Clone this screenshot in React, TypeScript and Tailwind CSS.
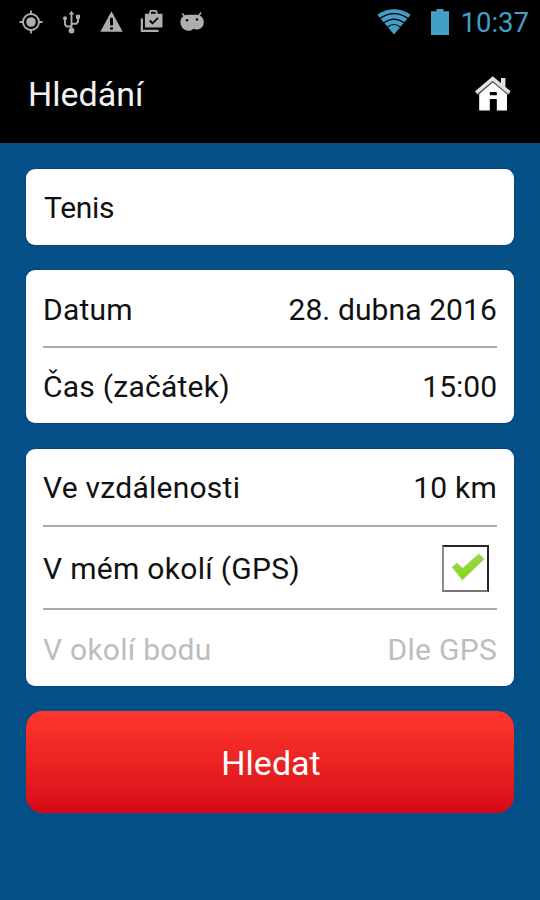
import type { ReactNode } from 'react';

type RowProps = {
  label: string;
  labelClass: string;
  value?: ReactNode;
  className: string;
};

function Row({ label, labelClass, value, className }: RowProps) {
  return (
    <div className={`flex items-center justify-between ${className}`}>
      <span className={labelClass}>{label}</span>
      {value}
    </div>
  );
}

function Divider() {
  return <div className="h-[2px] shrink-0 bg-[#aaaaaa]" />;
}

function Card({ className, children }: { className: string; children: ReactNode }) {
  return (
    <section
      className={`flex flex-col rounded-[9px] bg-white px-[17px] text-[30px] leading-none text-[#111] shadow-[0_0_0_1px_#084384] ${className}`}
    >
      {children}
    </section>
  );
}

function StatusIcons() {
  return (
    <div className="flex items-center gap-4 text-[#aeaeae]">
      <svg width="24" height="24" viewBox="0 0 24 24" fill="none" stroke="currentColor">
        <circle cx="12" cy="12" r="8" strokeWidth="1.9" />
        <circle cx="12" cy="12" r="4.8" fill="currentColor" stroke="none" />
        <path d="M12 .5v4M12 19.5v4M.5 12h4M19.5 12h4" strokeWidth="1.8" />
      </svg>
      <svg width="24" height="24" viewBox="0 0 24 24" fill="none" stroke="currentColor" strokeWidth="1.9">
        <path d="M12.5 3v17M12.5 16.5H7.7L6 14.6V9M12.5 13.7h4.7l1.8-1.8V7" />
        <path d="M9.6 4.6 12.5.8l2.9 3.8z" fill="currentColor" stroke="none" />
        <circle cx="12.5" cy="20.6" r="2.9" fill="currentColor" stroke="none" />
        <circle cx="6" cy="8.3" r="2" fill="currentColor" stroke="none" />
        <path d="M17 4.8h4v4h-4z" fill="currentColor" stroke="none" />
      </svg>
      <svg width="24" height="24" viewBox="0 0 24 24">
        <path d="M12.5 1.2 23.7 21.7H1.3z" fill="currentColor" />
        <rect x="11" y="7.8" width="3" height="7.8" rx="1" fill="black" />
        <rect x="11" y="17.2" width="3" height="2.5" rx="1" fill="black" />
      </svg>
      <svg width="24" height="24" viewBox="0 0 24 24" fill="none">
        <path d="M2.9 8.5v12.4h16.6" stroke="currentColor" strokeWidth="2.2" />
        <path d="M11 4V2.4Q11 .8 12.6.8H16q1.6 0 1.6 1.6V4" stroke="currentColor" strokeWidth="1.8" />
        <path d="M5.9 3.8h17.6v12.5q0 1.2-1.2 1.2H7.1q-1.2 0-1.2-1.2z" fill="currentColor" />
        <path d="m10.7 10.5 2.8 2.8 5.6-5.4" stroke="black" strokeWidth="1.8" />
      </svg>
      <svg width="26" height="24" viewBox="0 0 26 24">
        <path d="m3.3 3.5 3.2 4M22 2.5l-2.7 4" stroke="currentColor" strokeWidth="1.5" />
        <path
          d="M1.4 12.6C1.2 8 4.6 4.8 9 4.8h7.6c4.6 0 8 2.6 8.2 7 .2 4.2-2.6 7.4-6.6 7.6-1.6.1-2.8-.2-3.8-.7-1.2 1.4-3 2.2-5 2.1-4.4-.2-7.8-3.8-8-8.2z"
          fill="currentColor"
        />
        <circle cx="8" cy="10.2" r="1.2" fill="black" />
        <circle cx="18" cy="9.5" r="1.2" fill="black" />
      </svg>
    </div>
  );
}

function WifiIcon() {
  return (
    <svg width="34" height="26" viewBox="0 0 34 26">
      <path d="M.3 5.7Q17-5.2 33.7 5.7L17 25.5z" fill="currentColor" />
      <path
        d="M2.8 9.5Q17-.2 31.2 9.5M6.8 13.8Q17 6.4 27.2 13.8M10.6 18Q17 13 23.4 18"
        fill="none"
        stroke="black"
        strokeWidth="1.2"
      />
    </svg>
  );
}

function HomeIcon() {
  return (
    <svg width="36" height="36" viewBox="0 0 36 36">
      <path d="M26 2h4.4v14H26z" fill="#e4e4e4" />
      <path
        d="M4.2 18 17.8 6 32 18v16.5H21.8V23h-7v11.5H4.2zM14.8 16v3.2h7V16z"
        fill="white"
        fillRule="evenodd"
      />
      <path d="m1.3 17.6 16.5-14 16.6 14" fill="none" stroke="#555" strokeWidth="4.2" />
      <path d="m1.3 16.5 16.5-14 16.6 14" fill="none" stroke="#e2e2e2" strokeWidth="3.6" />
    </svg>
  );
}

function Checkbox() {
  return (
    <div className="mr-2 flex h-[47px] w-[47px] items-center justify-center border-2 border-t-[#262626] border-r-[#262626] border-b-[#777] border-l-[#8a8a8a]">
      <svg width="43" height="43" viewBox="0 0 43 43">
        <defs>
          <linearGradient id="tick" x1="0" y1="0" x2="0" y2="1">
            <stop offset="0" stopColor="#99d94a" />
            <stop offset="1" stopColor="#7fd90c" />
          </linearGradient>
        </defs>
        <path
          d="m8.2 20.2 4.6-4 5.9 5L35 6.9l5.2 5-21.8 21z"
          fill="url(#tick)"
          stroke="#b5cf9d"
          strokeWidth="1"
          strokeLinejoin="round"
        />
      </svg>
    </div>
  );
}

export default function App() {
  return (
    <div className="flex h-[900px] w-[540px] flex-col overflow-hidden bg-[#045086] font-[Roboto,sans-serif]">
      <div className="flex h-11 items-center justify-between bg-black pr-[11px] pl-[19px]">
        <StatusIcons />
        <div className="flex items-center text-[#439fc8]">
          <WifiIcon />
          <svg className="ml-5" width="18" height="28" viewBox="0 0 18 28">
            <path d="M5.5 1h7v2.2H18V27H0V3.2h5.5z" fill="currentColor" />
          </svg>
          <span className="ml-3 pt-0.5 text-[27.5px] leading-none">10:37</span>
        </div>
      </div>

      <header className="flex h-[99px] items-center justify-between bg-black pr-[29px] pl-7">
        <h1 className="text-[34px] leading-none text-[#f2f2f2]">Hledání</h1>
        <HomeIcon />
      </header>

      <main className="flex flex-col px-[26px] pt-[26px]">
        <Card className="h-[76px]">
          <Row className="h-[76px] pt-0.5" label="Tenis" labelClass="pl-px tracking-[-0.3px]" />
        </Card>

        <Card className="mt-[25px] h-[153px]">
          <Row
            className="h-[76px] pt-1"
            label="Datum"
            labelClass="tracking-[0.2px]"
            value={<span className="tracking-[0.1px]">28. dubna 2016</span>}
          />
          <Divider />
          <Row
            className="h-[75px] pt-0.5"
            label="Čas (začátek)"
            labelClass="tracking-[0.25px]"
            value={<span>15:00</span>}
          />
        </Card>

        <Card className="mt-[26px] h-[237px]">
          <Row
            className="h-[76px] pt-0.5"
            label="Ve vzdálenosti"
            labelClass="tracking-[0.25px]"
            value={<span className="tracking-[0.2px]">10 km</span>}
          />
          <Divider />
          <Row
            className="h-[81px] pt-0.5"
            label="V mém okolí (GPS)"
            labelClass="tracking-[0.3px]"
            value={<Checkbox />}
          />
          <Divider />
          <Row
            className="h-[76px] pt-[3px] text-[#bdbdbd]"
            label="V okolí bodu"
            labelClass="tracking-[0.25px]"
            value={<span className="tracking-[0.3px]">Dle GPS</span>}
          />
        </Card>

        <button className="mt-[25px] h-[102px] rounded-[17px] bg-linear-to-b from-[#ff352e] to-[#d70717] pt-0.5 pl-0.5 text-[34px] leading-none text-white">
          Hledat
        </button>
      </main>
    </div>
  );
}
